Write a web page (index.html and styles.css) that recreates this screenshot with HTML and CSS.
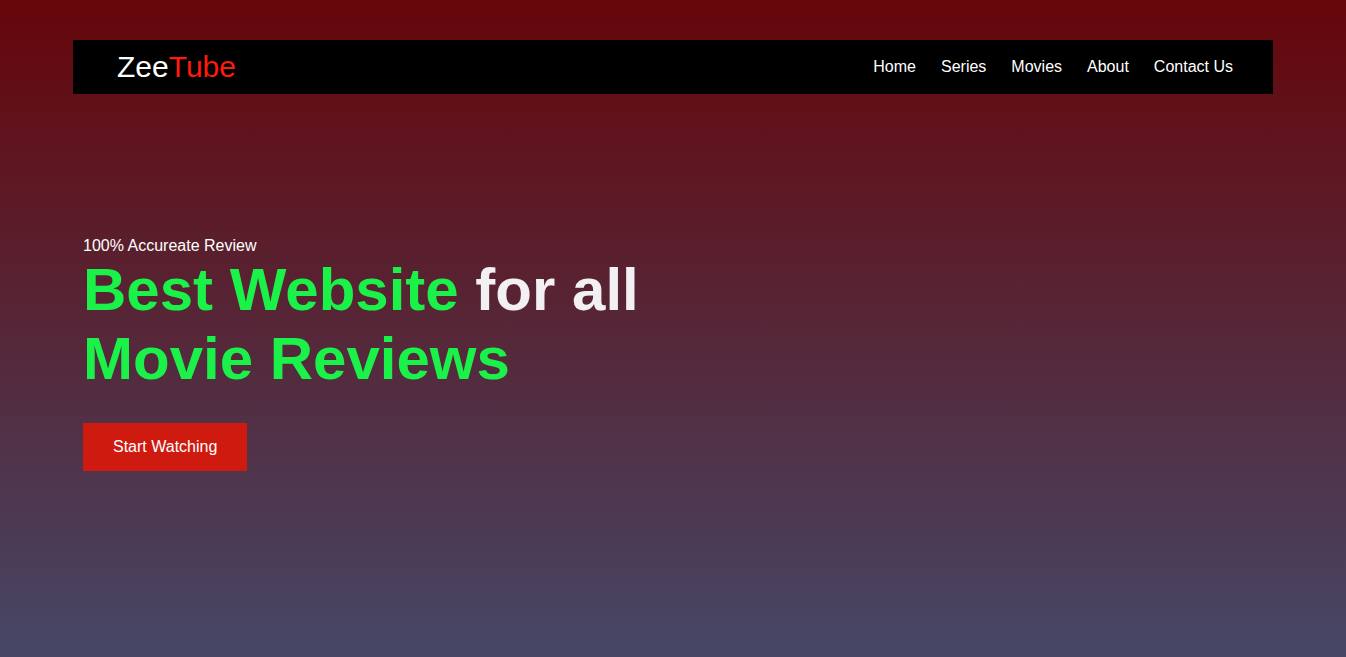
FILE: index.html
```html
<!DOCTYPE html>
<html lang="en">
<head>
<meta charset="UTF-8">
<title>ZeeTube</title>
<link rel="stylesheet" href="styles.css">
</head>
<body>
<div class="page">
  <nav class="navbar">
    <div class="logo">Zee<span class="logo-red">Tube</span></div>
    <ul class="nav-links">
      <li><a href="#">Home</a></li>
      <li><a href="#">Series</a></li>
      <li><a href="#">Movies</a></li>
      <li><a href="#">About</a></li>
      <li><a href="#">Contact Us</a></li>
    </ul>
  </nav>
  <section class="hero">
    <p class="tagline">100% Accureate Review</p>
    <h1 class="headline"><span class="green">Best Website</span> for all <br><span class="green">Movie Reviews</span></h1>
    <a href="#" class="btn">Start Watching</a>
  </section>
</div>
</body>
</html>
```

FILE: styles.css
```css
html, body {
  margin: 0;
  padding: 0;
}
body {
  min-height: 100vh;
  background: linear-gradient(to bottom, #66060a 0%, #464766 100%);
  font-family: "Liberation Sans", Arial, sans-serif;
  color: #fff;
}
.page {
  padding: 40px 73px 0 73px;
}
.navbar {
  height: 54px;
  background: #000;
  display: flex;
  align-items: center;
  justify-content: space-between;
  padding: 0 40px 0 44px;
}
.logo {
  font-size: 30px;
  color: #fff;
}
.logo-red {
  color: #ff1a0a;
}
.nav-links {
  list-style: none;
  margin: 0;
  padding: 0;
  display: flex;
  gap: 25px;
}
.nav-links a {
  color: #fff;
  text-decoration: none;
  font-size: 16px;
}
.hero {
  padding: 143px 0 0 10px;
}
.tagline {
  margin: 0;
  font-size: 16px;
  line-height: 18px;
  color: #fff;
}
.headline {
  margin: 0;
  font-size: 60px;
  font-weight: bold;
  line-height: 69px;
  color: #f2f0f2;
}
.green {
  color: #1af24a;
}
.btn {
  display: inline-block;
  margin-top: 30px;
  padding: 15px 30px;
  background: #cf1a10;
  color: #fff;
  text-decoration: none;
  font-size: 16px;
  line-height: 18px;
}
```
